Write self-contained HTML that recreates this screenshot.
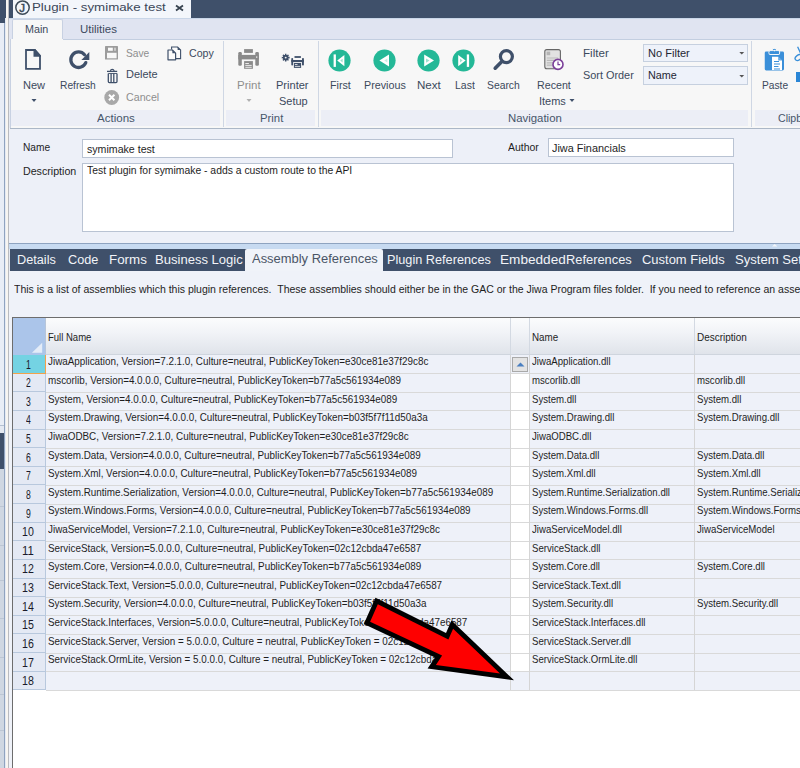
<!DOCTYPE html>
<html><head><meta charset="utf-8"><style>
html,body{margin:0;padding:0;}
body{width:800px;height:768px;position:relative;overflow:hidden;background:#e4e9f2;font-family:"Liberation Sans",sans-serif;}
.a{position:absolute;box-sizing:border-box;}
.t{position:absolute;white-space:nowrap;transform-origin:0 0;}
svg{position:absolute;overflow:visible;}
</style></head><body>
<div class="a" style="left:0px;top:0px;width:800px;height:17.5px;background:#3f506a"></div>
<div class="a" style="left:0px;top:0px;width:4.7px;height:22.5px;background:#3f506a"></div>
<div class="a" style="left:0px;top:22.5px;width:4.7px;height:402.5px;background:#e8edf6"></div>
<div class="a" style="left:0px;top:425px;width:4.7px;height:1px;background:#b4c0d2"></div>
<div class="a" style="left:0px;top:433px;width:4.7px;height:36.4px;background:#3f506a"></div>
<div class="a" style="left:0px;top:469.4px;width:4.7px;height:300px;background:#cfd7e2"></div>
<div class="a" style="left:0px;top:506px;width:4.7px;height:0.8px;background:#bcc6d4"></div>
<div class="a" style="left:0px;top:545px;width:4.7px;height:0.8px;background:#bcc6d4"></div>
<div class="a" style="left:0px;top:580px;width:4.7px;height:0.8px;background:#bcc6d4"></div>
<div class="a" style="left:0px;top:618px;width:4.7px;height:0.8px;background:#bcc6d4"></div>
<div class="a" style="left:0px;top:657px;width:4.7px;height:0.8px;background:#bcc6d4"></div>
<div class="a" style="left:0px;top:694px;width:4.7px;height:0.8px;background:#bcc6d4"></div>
<div class="a" style="left:0px;top:730px;width:4.7px;height:0.8px;background:#bcc6d4"></div>
<div class="a" style="left:4.2px;top:22.5px;width:1.3px;height:746px;background:#8fa3c0"></div>
<div class="a" style="left:5.5px;top:0px;width:2.7px;height:768px;background:#f7f5f1"></div>
<div class="a" style="left:8.2px;top:0px;width:1px;height:768px;background:#b9bbc0"></div>
<div class="a" style="left:13px;top:0px;width:178px;height:17.5px;background:#f3f6fb"></div>
<svg style="left:15px;top:0px" width="16" height="16" viewBox="0 0 16 16"><circle cx="7.5" cy="7.6" r="6.7" fill="none" stroke="#3c4a58" stroke-width="1.5"/><text x="7.2" y="12.2" text-anchor="middle" font-family="Liberation Sans" font-size="11.5" fill="#3c4a58" stroke="#3c4a58" stroke-width="0.5">J</text></svg>
<span class="t" style="left:32.00px;top:1.51px;font-size:11px;line-height:11px;color:#3a4658;transform:scaleX(1.2093);">Plugin - symimake test</span>
<svg style="left:175px;top:5px" width="9" height="6" viewBox="0 0 9 6"><path d="M1 0.5 L8 5.5 M8 0.5 L1 5.5" stroke="#36424f" stroke-width="1.8"/></svg>
<div class="a" style="left:9.2px;top:17.5px;width:791px;height:21.8px;background:#e0e4f1;border-top:1px solid #c9d6e8"></div>
<div class="a" style="left:12px;top:19px;width:50.5px;height:20.5px;background:#f7f7f7;border:1px solid #c8d1e2;border-bottom:none;border-radius:2px 2px 0 0"></div>
<span class="t" style="left:24.50px;top:24.11px;font-size:11px;line-height:11px;color:#3d4a5e;transform:scaleX(0.9773);">Main</span>
<span class="t" style="left:79.50px;top:24.11px;font-size:11px;line-height:11px;color:#3d4a5e;transform:scaleX(1.0409);">Utilities</span>
<div class="a" style="left:9.5px;top:39.3px;width:790.5px;height:88.3px;background:#f7f7f7;border-left:1px solid #c8d1e2"></div>
<div class="a" style="left:62.5px;top:39.0px;width:737.5px;height:1px;background:#c3cee0"></div>
<div class="a" style="left:10.5px;top:110px;width:209px;height:16px;background:#eceef6"></div>
<div class="a" style="left:226px;top:110px;width:88.5px;height:16px;background:#eceef6"></div>
<div class="a" style="left:321px;top:110px;width:427px;height:16px;background:#eceef6"></div>
<div class="a" style="left:755px;top:110px;width:45px;height:16px;background:#eceef6"></div>
<div class="a" style="left:222.5px;top:40.5px;width:1.2px;height:86.5px;background:#cfd7e4"></div>
<div class="a" style="left:317.6px;top:40.5px;width:1.2px;height:86.5px;background:#cfd7e4"></div>
<div class="a" style="left:751px;top:40.5px;width:1.2px;height:86.5px;background:#cfd7e4"></div>
<span class="t" style="left:97.00px;top:112.91px;font-size:11px;line-height:11px;color:#46556a;transform:scaleX(1.0479);">Actions</span>
<span class="t" style="left:259.50px;top:112.91px;font-size:11px;line-height:11px;color:#46556a;transform:scaleX(1.0302);">Print</span>
<span class="t" style="left:508.00px;top:112.91px;font-size:11px;line-height:11px;color:#46556a;transform:scaleX(1.0351);">Navigation</span>
<span class="t" style="left:777.70px;top:112.91px;font-size:11px;line-height:11px;color:#46556a;transform:scaleX(0.9614);">Clipboard</span>
<svg style="left:24px;top:48px" width="19" height="23" viewBox="0 0 19 23"><path d="M2 2 H10.8 L16 7.9 V20.9 H2 Z" fill="none" stroke="#3f506a" stroke-width="1.8" stroke-linejoin="miter"/><path d="M9.5 1.1 H11.2 L16.9 7.5 V8.7 H9.5 Z" fill="#3f506a"/></svg>
<span class="t" style="left:23.10px;top:80.31px;font-size:11px;line-height:11px;color:#3b495c;transform:scaleX(1.0043);">New</span>
<svg style="left:30.5px;top:98.5px" width="6" height="4" viewBox="0 0 6 4"><path d="M0.5 0 H5.5 L3 3 Z" fill="#3f506a"/></svg>
<svg style="left:64.6px;top:46px" width="28" height="28" viewBox="0 0 28 28"><path d="M19.54 8.72 A7.75 7.75 0 1 0 20.78 16.6" fill="none" stroke="#3f506a" stroke-width="3.3" stroke-linecap="round"/><path d="M16.4 14.0 L24.3 14.0 L24.3 6.0 Z" fill="#3f506a"/></svg>
<span class="t" style="left:60.00px;top:80.31px;font-size:11px;line-height:11px;color:#3b495c;transform:scaleX(0.9295);">Refresh</span>
<svg style="left:105px;top:46.2px" width="13" height="13.6" viewBox="0 0 13 13.6"><rect x="0" y="0" width="13" height="13.6" rx="0.6" fill="#9c9c9c"/><rect x="3" y="1.7" width="4.8" height="3.1" fill="#fafafa"/><rect x="9" y="1.7" width="2" height="3.1" fill="#cacaca"/><rect x="2" y="6.8" width="9.6" height="5.5" fill="#f8f8f8"/></svg>
<span class="t" style="left:125.80px;top:48.01px;font-size:11px;line-height:11px;color:#8e8e8e;transform:scaleX(0.9293);">Save</span>
<svg style="left:106px;top:68px" width="13" height="16" viewBox="0 0 13 16"><path d="M1 3.4 H11.2" stroke="#3f506a" stroke-width="1.3"/><path d="M4.4 3 Q4.6 1.4 6.2 1.4 Q7.8 1.4 8.2 3" fill="none" stroke="#3f506a" stroke-width="1.1"/><path d="M2.3 5.5 V13.6 Q2.3 14.6 3.3 14.6 H10 Q11 14.6 11 13.6 V5.5" fill="none" stroke="#3f506a" stroke-width="1.3"/><path d="M2.3 5.5 H11" stroke="#3f506a" stroke-width="0.9"/><path d="M5.1 5.6 V14 M7.8 5.6 V14" stroke="#3f506a" stroke-width="1.3"/></svg>
<span class="t" style="left:125.80px;top:69.46px;font-size:11px;line-height:11px;color:#3b495c;transform:scaleX(0.9970);">Delete</span>
<svg style="left:104px;top:90px" width="16" height="16" viewBox="0 0 16 16"><circle cx="7.7" cy="7.5" r="7.4" fill="#a8a8a8"/><path d="M5 4.8 L10.4 10.2 M10.4 4.8 L5 10.2" stroke="#ffffff" stroke-width="2"/></svg>
<span class="t" style="left:125.80px;top:91.96px;font-size:11px;line-height:11px;color:#8e8e8e;transform:scaleX(0.9696);">Cancel</span>
<svg style="left:167px;top:45.5px" width="15" height="15" viewBox="0 0 15 15"><path d="M4.6 3.5 V1 H10.6 L13.6 4 V12.6 H9" fill="#fbfbfb" stroke="#3f506a" stroke-width="1.1"/><path d="M10.6 1 V4 H13.6 Z" fill="#3f506a"/><path d="M1 4 H5.4 L8.6 7.2 V13.8 H1 Z" fill="#fbfbfb" stroke="#3f506a" stroke-width="1.2" stroke-linejoin="round"/><path d="M5.4 4 V7.2 H8.6 Z" fill="#3f506a"/></svg>
<span class="t" style="left:188.50px;top:48.01px;font-size:11px;line-height:11px;color:#3b495c;transform:scaleX(0.9658);">Copy</span>
<svg style="left:238px;top:49px" width="22" height="21" viewBox="0 0 22 21"><g fill="#8a8a8a"><rect x="6.1" y="0.1" width="8.8" height="3.8"/><rect x="0.3" y="3.1" width="3.5" height="13.7" rx="1.2"/><rect x="17.3" y="3.1" width="3.6" height="13.7" rx="1.2"/><rect x="0.3" y="5.9" width="20.6" height="4.5"/><rect x="6.1" y="12.1" width="8.8" height="7.7"/></g><rect x="18.1" y="7.4" width="1.2" height="1.4" fill="#f2f2f2"/><g fill="#f7f7f7"><rect x="7.3" y="14.0" width="3.6" height="0.9"/><rect x="7.3" y="15.9" width="6.4" height="0.9"/><rect x="7.3" y="17.8" width="6.4" height="0.9"/></g></svg>
<span class="t" style="left:236.90px;top:80.31px;font-size:11px;line-height:11px;color:#8e8e8e;transform:scaleX(1.0456);">Print</span>
<svg style="left:245.5px;top:98.5px" width="6" height="4" viewBox="0 0 6 4"><path d="M0.5 0 H5.5 L3 3 Z" fill="#b0b0b0"/></svg>
<svg style="left:281px;top:53px" width="24" height="16" viewBox="0 0 24 16"><path d="M7.53 3.97 L8.62 3.81 L8.62 5.39 L7.53 5.23 L7.15 6.15 L8.03 6.81 L6.91 7.93 L6.25 7.05 L5.33 7.43 L5.49 8.52 L3.91 8.52 L4.07 7.43 L3.15 7.05 L2.49 7.93 L1.37 6.81 L2.25 6.15 L1.87 5.23 L0.78 5.39 L0.78 3.81 L1.87 3.97 L2.25 3.05 L1.37 2.39 L2.49 1.27 L3.15 2.15 L4.07 1.77 L3.91 0.68 L5.49 0.68 L5.33 1.77 L6.25 2.15 L6.91 1.27 L8.03 2.39 L7.15 3.05 Z" fill="#3f506a"/><circle cx="4.7" cy="4.6" r="2.6" fill="#3f506a"/><circle cx="4.7" cy="4.6" r="0.95" fill="#f7f7f7"/><g fill="#3f506a"><rect x="13.5" y="3.1" width="6.4" height="1.8"/><rect x="10.3" y="4.9" width="1.8" height="7.7" rx="0.8"/><rect x="21" y="4.9" width="1.9" height="7.7" rx="0.8"/><rect x="10.3" y="7" width="12.6" height="2.1"/><rect x="12.9" y="10" width="7.2" height="4.9"/></g><g fill="#f7f7f7"><rect x="13.9" y="11.1" width="2.6" height="0.8"/><rect x="13.9" y="12.9" width="5.2" height="0.8"/></g></svg>
<span class="t" style="left:276.25px;top:80.31px;font-size:11px;line-height:11px;color:#3b495c;transform:scaleX(1.0047);">Printer</span>
<span class="t" style="left:279.00px;top:95.61px;font-size:11px;line-height:11px;color:#3b495c;transform:scaleX(0.9984);">Setup</span>
<svg style="left:328.4px;top:48.5px" width="23" height="23" viewBox="0 0 23 23"><circle cx="11.5" cy="11.5" r="11.1" fill="#24b897"/><rect x="5.6" y="5.4" width="2.3" height="12.5" fill="#fff"/><path d="M9.2 11.6 L16.4 6.0 V17.2 Z" fill="#fff"/><path d="M12.2 11.6 L14.6 9.8 V13.4 Z" fill="#9fe0d0"/></svg>
<svg style="left:372.7px;top:48.5px" width="23" height="23" viewBox="0 0 23 23"><circle cx="11.5" cy="11.5" r="11.1" fill="#24b897"/><path d="M6.4 11.6 L16.0 5.6 V17.4 Z" fill="#fff"/><path d="M11.2 11.6 L14.4 9.6 V13.6 Z" fill="#c8eee4"/></svg>
<svg style="left:416.9px;top:48.5px" width="23" height="23" viewBox="0 0 23 23"><circle cx="11.5" cy="11.5" r="11.1" fill="#24b897"/><path d="M7.2 5.6 L17.0 11.6 L7.2 17.4 Z" fill="#fff"/><path d="M9.0 9.4 L12.6 11.6 L9.0 13.8 Z" fill="#9fe0d0"/></svg>
<svg style="left:452.2px;top:48.5px" width="23" height="23" viewBox="0 0 23 23"><circle cx="11.5" cy="11.5" r="11.1" fill="#24b897"/><path d="M6.2 5.9 L13.6 11.6 L6.2 17.2 Z" fill="#fff"/><path d="M8.0 9.6 L10.6 11.6 L8.0 13.6 Z" fill="#9fe0d0"/><rect x="14.8" y="5.4" width="2.3" height="12.5" fill="#fff"/></svg>
<span class="t" style="left:330.00px;top:80.31px;font-size:11px;line-height:11px;color:#3b495c;transform:scaleX(0.9728);">First</span>
<span class="t" style="left:364.00px;top:80.31px;font-size:11px;line-height:11px;color:#3b495c;transform:scaleX(0.9767);">Previous</span>
<span class="t" style="left:417.00px;top:80.31px;font-size:11px;line-height:11px;color:#3b495c;transform:scaleX(1.0523);">Next</span>
<span class="t" style="left:455.00px;top:80.31px;font-size:11px;line-height:11px;color:#3b495c;transform:scaleX(0.9523);">Last</span>
<svg style="left:492px;top:48px" width="24" height="23" viewBox="0 0 24 23"><circle cx="14.4" cy="8.6" r="6" fill="none" stroke="#3f506a" stroke-width="3.2"/><path d="M9.6 13.8 L3.2 20.2" stroke="#3f506a" stroke-width="3.6" stroke-linecap="round"/></svg>
<span class="t" style="left:487.00px;top:80.31px;font-size:11px;line-height:11px;color:#3b495c;transform:scaleX(0.9411);">Search</span>
<svg style="left:544px;top:49px" width="22" height="22" viewBox="0 0 22 22"><rect x="0.8" y="0.6" width="15.6" height="19.2" rx="2" fill="#e2e2e2" stroke="#666" stroke-width="1.1"/><rect x="2.6" y="2.6" width="3.6" height="3.6" fill="#b4b4b4"/><path d="M2.8 9 H14 M2.8 11.4 H14 M2.8 13.8 H10 M2.8 16.2 H10" stroke="#b9b9b9" stroke-width="1.2"/><circle cx="14" cy="15.4" r="5" fill="#fff" stroke="#7b3f99" stroke-width="1.6"/><path d="M14 12.6 V15.6 H16.2" fill="none" stroke="#7b3f99" stroke-width="1.2"/></svg>
<span class="t" style="left:537.00px;top:80.31px;font-size:11px;line-height:11px;color:#3b495c;transform:scaleX(0.9698);">Recent</span>
<span class="t" style="left:539.00px;top:95.61px;font-size:11px;line-height:11px;color:#3b495c;transform:scaleX(0.9965);">Items</span>
<svg style="left:568.5px;top:98.5px" width="6" height="4" viewBox="0 0 6 4"><path d="M0.5 0 H5.5 L3 3 Z" fill="#3f506a"/></svg>
<span class="t" style="left:583.00px;top:47.61px;font-size:11px;line-height:11px;color:#3b495c;transform:scaleX(1.0555);">Filter</span>
<span class="t" style="left:583.00px;top:69.71px;font-size:11px;line-height:11px;color:#3b495c;transform:scaleX(0.9893);">Sort Order</span>
<div class="a" style="left:643.3px;top:44px;width:104.5px;height:18px;background:#eef2fa;border:1px solid #c6d0df"></div>
<div class="a" style="left:643.3px;top:66px;width:104.5px;height:18.7px;background:#eef2fa;border:1px solid #c6d0df"></div>
<span class="t" style="left:647.50px;top:47.61px;font-size:11px;line-height:11px;color:#1f2633;transform:scaleX(1.0057);">No Filter</span>
<span class="t" style="left:647.50px;top:69.91px;font-size:11px;line-height:11px;color:#1f2633;transform:scaleX(0.9815);">Name</span>
<svg style="left:739px;top:52.2px" width="6" height="4" viewBox="0 0 6 4"><path d="M0.3 0 H5.2 L2.75 2.6 Z" fill="#555"/></svg>
<svg style="left:739px;top:74.6px" width="6" height="4" viewBox="0 0 6 4"><path d="M0.3 0 H5.2 L2.75 2.6 Z" fill="#555"/></svg>
<svg style="left:764px;top:48px" width="22" height="24" viewBox="0 0 22 24"><rect x="0.75" y="3.5" width="19.25" height="19" rx="1.4" fill="#3a8fd9"/><g stroke="#f7f7f7" stroke-width="1.1" fill="#3a8fd9"><circle cx="10.4" cy="2.6" r="2.3"/><rect x="5" y="2.8" width="10.6" height="3.6" rx="1.4"/></g><rect x="5.5" y="3.3" width="9.6" height="2.6" rx="1" fill="#3a8fd9"/><circle cx="10.4" cy="2.6" r="0.8" fill="#f7f7f7"/><path d="M8 8.75 H14.2 L18 12.5 V22 H8 Z" fill="#fff"/><path d="M14.2 8.75 V12.5 H18 Z" fill="#3a8fd9" opacity="0.8"/><path d="M10 13.5 H15 M10 16 H16 M10 18.5 H14.5 M10 21 H16" fill="none" stroke="#3a8fd9" stroke-width="1"/></svg>
<span class="t" style="left:761.70px;top:80.11px;font-size:11px;line-height:11px;color:#3b495c;transform:scaleX(0.9279);">Paste</span>
<svg style="left:793px;top:46px" width="10" height="16" viewBox="0 0 10 16"><path d="M4.6 0.8 L8 8" stroke="#3a8fd9" stroke-width="1.3"/><ellipse cx="5.4" cy="11.6" rx="3.6" ry="2.4" transform="rotate(-35 5.4 11.6)" fill="none" stroke="#3a8fd9" stroke-width="1.4"/></svg>
<div class="a" style="left:796px;top:72px;width:4px;height:10px;background:#2a86d6"></div>
<div class="a" style="left:9.2px;top:128px;width:790.8px;height:115.5px;background:#edf0f8"></div>
<div class="a" style="left:9.5px;top:127.5px;width:790.5px;height:1.4px;background:#abb7c7"></div>
<span class="t" style="left:22.80px;top:142.31px;font-size:11px;line-height:11px;color:#1e1e1e;transform:scaleX(0.9270);">Name</span>
<span class="t" style="left:22.80px;top:166.41px;font-size:11px;line-height:11px;color:#1e1e1e;transform:scaleX(0.9687);">Description</span>
<span class="t" style="left:508.00px;top:141.91px;font-size:11px;line-height:11px;color:#1e1e1e;transform:scaleX(0.9503);">Author</span>
<div class="a" style="left:82px;top:139px;width:370.5px;height:18.5px;background:#ffffff;border:1px solid #b9c3d3"></div>
<div class="a" style="left:547.8px;top:138.1px;width:186px;height:18.8px;background:#ffffff;border:1px solid #b9c3d3"></div>
<div class="a" style="left:82px;top:163.3px;width:651.8px;height:68.5px;background:#ffffff;border:1px solid #b9c3d3"></div>
<span class="t" style="left:86.50px;top:143.91px;font-size:11px;line-height:11px;color:#1e1e1e;transform:scaleX(0.9646);">symimake test</span>
<span class="t" style="left:551.50px;top:143.01px;font-size:11px;line-height:11px;color:#1e1e1e;transform:scaleX(0.9895);">Jiwa Financials</span>
<span class="t" style="left:86.50px;top:165.31px;font-size:11px;line-height:11px;color:#1e1e1e;transform:scaleX(0.9431);">Test plugin for symimake - adds a custom route to the API</span>
<div class="a" style="left:9.2px;top:243px;width:790.8px;height:1px;background:#8ea3c0"></div>
<div class="a" style="left:9.2px;top:244px;width:790.8px;height:4.6px;background:#c7daf1"></div>
<div class="a" style="left:9.5px;top:248.6px;width:790.5px;height:22.6px;background:#3f506a"></div>
<svg style="left:771.5px;top:243.8px" width="6" height="3" viewBox="0 0 6 3"><path d="M0 2.6 L2.7 0 L5.4 2.6 Z" fill="#f4f6fa"/></svg>
<div class="a" style="left:245px;top:248.6px;width:138px;height:22.8px;background:#f0f3f9;border-radius:2px 2px 0 0"></div>
<span class="t" style="left:17.00px;top:254.09px;font-size:12px;line-height:12px;color:#f2f4f8;transform:scaleX(1.0578);">Details</span>
<span class="t" style="left:68.00px;top:254.09px;font-size:12px;line-height:12px;color:#f2f4f8;transform:scaleX(1.0562);">Code</span>
<span class="t" style="left:109.00px;top:254.09px;font-size:12px;line-height:12px;color:#f2f4f8;transform:scaleX(1.1119);">Forms</span>
<span class="t" style="left:155.00px;top:254.09px;font-size:12px;line-height:12px;color:#f2f4f8;transform:scaleX(1.0878);">Business Logic</span>
<span class="t" style="left:252.00px;top:253.09px;font-size:12px;line-height:12px;color:#4a5566;transform:scaleX(1.0779);">Assembly References</span>
<span class="t" style="left:387.00px;top:254.09px;font-size:12px;line-height:12px;color:#f2f4f8;transform:scaleX(1.0586);">Plugin References</span>
<span class="t" style="left:500.00px;top:254.09px;font-size:12px;line-height:12px;color:#f2f4f8;transform:scaleX(1.1336);">Embedded</span>
<span class="t" style="left:566.00px;top:254.09px;font-size:12px;line-height:12px;color:#f2f4f8;transform:scaleX(1.0723);">References</span>
<span class="t" style="left:642.00px;top:254.09px;font-size:12px;line-height:12px;color:#f2f4f8;transform:scaleX(1.0797);">Custom Fields</span>
<span class="t" style="left:735.00px;top:254.09px;font-size:12px;line-height:12px;color:#f2f4f8;transform:scaleX(1.0888);">System Settings</span>
<div class="a" style="left:9.2px;top:271.2px;width:790.8px;height:497px;background:#eff2f9"></div>
<span class="t" style="left:14.00px;top:284.21px;font-size:11px;line-height:11px;color:#1e1e1e;transform:scaleX(0.9547);">This is a list of assemblies which this plugin references. &nbsp;These assemblies should either be in the GAC or the Jiwa Program files folder. &nbsp;If you need to reference an assembly</span>
<div class="a" style="left:11.6px;top:316.8px;width:788.4px;height:451.2px;background:#ffffff"></div>
<div class="a" style="left:11.6px;top:316.8px;width:788.4px;height:1.6px;background:#6d6d6d"></div>
<div class="a" style="left:11.6px;top:316.8px;width:1.4px;height:451.2px;background:#6d6d6d"></div>
<div class="a" style="left:13px;top:318.4px;width:32.5px;height:36.700000000000045px;background:#abc5ea"></div>
<svg style="left:31px;top:342px" width="12" height="12" viewBox="0 0 12 12"><path d="M0.9 10.8 L11.2 10.8 L11.2 0.8 Z" fill="#e4ecf8"/></svg>
<div class="a" style="left:45px;top:318.4px;width:1.2px;height:36.700000000000045px;background:#b7c5d9"></div>
<div class="a" style="left:46.2px;top:318.4px;width:753.8px;height:36.700000000000045px;background:linear-gradient(#fbfcfd 0%,#f1f3f7 40%,#dfe3ea 100%)"></div>
<div class="a" style="left:510.2px;top:318.4px;width:1px;height:36.700000000000045px;background:#d3d9e2"></div>
<div class="a" style="left:529.4px;top:318.4px;width:1px;height:36.700000000000045px;background:#d3d9e2"></div>
<div class="a" style="left:694.4px;top:318.4px;width:1px;height:36.700000000000045px;background:#d3d9e2"></div>
<div class="a" style="left:46.2px;top:354.1px;width:753.8px;height:1px;background:#cfd5de"></div>
<span class="t" style="left:47.80px;top:331.51px;font-size:11px;line-height:11px;color:#1e1e1e;transform:scaleX(0.8659);">Full Name</span>
<span class="t" style="left:531.60px;top:331.51px;font-size:11px;line-height:11px;color:#1e1e1e;transform:scaleX(0.8929);">Name</span>
<span class="t" style="left:697.00px;top:331.51px;font-size:11px;line-height:11px;color:#1e1e1e;transform:scaleX(0.9051);">Description</span>
<div class="a" style="left:46.2px;top:355.1px;width:753.8px;height:335.16px;background:#eef1f9"></div>
<div class="a" style="left:510.7px;top:373.72px;width:18.7px;height:297.92px;background:#ffffff"></div>
<div class="a" style="left:46.2px;top:373.22px;width:753.8px;height:0.9px;background:#d9d9d9"></div>
<div class="a" style="left:46.2px;top:391.84000000000003px;width:753.8px;height:0.9px;background:#d9d9d9"></div>
<div class="a" style="left:46.2px;top:410.46000000000004px;width:753.8px;height:0.9px;background:#d9d9d9"></div>
<div class="a" style="left:46.2px;top:429.08000000000004px;width:753.8px;height:0.9px;background:#d9d9d9"></div>
<div class="a" style="left:46.2px;top:447.70000000000005px;width:753.8px;height:0.9px;background:#d9d9d9"></div>
<div class="a" style="left:46.2px;top:466.32000000000005px;width:753.8px;height:0.9px;background:#d9d9d9"></div>
<div class="a" style="left:46.2px;top:484.94000000000005px;width:753.8px;height:0.9px;background:#d9d9d9"></div>
<div class="a" style="left:46.2px;top:503.56000000000006px;width:753.8px;height:0.9px;background:#d9d9d9"></div>
<div class="a" style="left:46.2px;top:522.1800000000001px;width:753.8px;height:0.9px;background:#d9d9d9"></div>
<div class="a" style="left:46.2px;top:540.8000000000001px;width:753.8px;height:0.9px;background:#d9d9d9"></div>
<div class="a" style="left:46.2px;top:559.4200000000001px;width:753.8px;height:0.9px;background:#d9d9d9"></div>
<div class="a" style="left:46.2px;top:578.0400000000001px;width:753.8px;height:0.9px;background:#d9d9d9"></div>
<div class="a" style="left:46.2px;top:596.66px;width:753.8px;height:0.9px;background:#d9d9d9"></div>
<div class="a" style="left:46.2px;top:615.2800000000001px;width:753.8px;height:0.9px;background:#d9d9d9"></div>
<div class="a" style="left:46.2px;top:633.9px;width:753.8px;height:0.9px;background:#d9d9d9"></div>
<div class="a" style="left:46.2px;top:652.5200000000001px;width:753.8px;height:0.9px;background:#d9d9d9"></div>
<div class="a" style="left:46.2px;top:671.14px;width:753.8px;height:0.9px;background:#d9d9d9"></div>
<div class="a" style="left:46.2px;top:689.7600000000001px;width:753.8px;height:0.9px;background:#d9d9d9"></div>
<div class="a" style="left:510.2px;top:355.1px;width:0.9px;height:335.16px;background:#d5d5d5"></div>
<div class="a" style="left:529.4px;top:355.1px;width:0.9px;height:335.16px;background:#d5d5d5"></div>
<div class="a" style="left:694.4px;top:355.1px;width:0.9px;height:335.16px;background:#d5d5d5"></div>
<div class="a" style="left:13px;top:355.1px;width:32.5px;height:18.62px;background:#74d3e3;border-right:1px solid #f2a24a;border-bottom:1px solid #f2a24a"></div>
<div class="a" style="left:13px;top:373.72px;width:32.5px;height:18.62px;background:#e4e9f4;border-right:1px solid #b8c8dd;border-bottom:1px solid #b8c8dd"></div>
<div class="a" style="left:13px;top:392.34000000000003px;width:32.5px;height:18.62px;background:#e4e9f4;border-right:1px solid #b8c8dd;border-bottom:1px solid #b8c8dd"></div>
<div class="a" style="left:13px;top:410.96000000000004px;width:32.5px;height:18.62px;background:#e4e9f4;border-right:1px solid #b8c8dd;border-bottom:1px solid #b8c8dd"></div>
<div class="a" style="left:13px;top:429.58000000000004px;width:32.5px;height:18.62px;background:#e4e9f4;border-right:1px solid #b8c8dd;border-bottom:1px solid #b8c8dd"></div>
<div class="a" style="left:13px;top:448.20000000000005px;width:32.5px;height:18.62px;background:#e4e9f4;border-right:1px solid #b8c8dd;border-bottom:1px solid #b8c8dd"></div>
<div class="a" style="left:13px;top:466.82000000000005px;width:32.5px;height:18.62px;background:#e4e9f4;border-right:1px solid #b8c8dd;border-bottom:1px solid #b8c8dd"></div>
<div class="a" style="left:13px;top:485.44000000000005px;width:32.5px;height:18.62px;background:#e4e9f4;border-right:1px solid #b8c8dd;border-bottom:1px solid #b8c8dd"></div>
<div class="a" style="left:13px;top:504.06000000000006px;width:32.5px;height:18.62px;background:#e4e9f4;border-right:1px solid #b8c8dd;border-bottom:1px solid #b8c8dd"></div>
<div class="a" style="left:13px;top:522.6800000000001px;width:32.5px;height:18.62px;background:#e4e9f4;border-right:1px solid #b8c8dd;border-bottom:1px solid #b8c8dd"></div>
<div class="a" style="left:13px;top:541.3000000000001px;width:32.5px;height:18.62px;background:#e4e9f4;border-right:1px solid #b8c8dd;border-bottom:1px solid #b8c8dd"></div>
<div class="a" style="left:13px;top:559.9200000000001px;width:32.5px;height:18.62px;background:#e4e9f4;border-right:1px solid #b8c8dd;border-bottom:1px solid #b8c8dd"></div>
<div class="a" style="left:13px;top:578.54px;width:32.5px;height:18.62px;background:#e4e9f4;border-right:1px solid #b8c8dd;border-bottom:1px solid #b8c8dd"></div>
<div class="a" style="left:13px;top:597.1600000000001px;width:32.5px;height:18.62px;background:#e4e9f4;border-right:1px solid #b8c8dd;border-bottom:1px solid #b8c8dd"></div>
<div class="a" style="left:13px;top:615.78px;width:32.5px;height:18.62px;background:#e4e9f4;border-right:1px solid #b8c8dd;border-bottom:1px solid #b8c8dd"></div>
<div class="a" style="left:13px;top:634.4000000000001px;width:32.5px;height:18.62px;background:#e4e9f4;border-right:1px solid #b8c8dd;border-bottom:1px solid #b8c8dd"></div>
<div class="a" style="left:13px;top:653.02px;width:32.5px;height:18.62px;background:#e4e9f4;border-right:1px solid #b8c8dd;border-bottom:1px solid #b8c8dd"></div>
<div class="a" style="left:13px;top:671.6400000000001px;width:32.5px;height:18.62px;background:#e4e9f4;border-right:1px solid #b8c8dd;border-bottom:1px solid #b8c8dd"></div>
<span class="t" style="left:25.80px;top:358.59px;font-size:12px;line-height:12px;color:#1a1a2a;transform:scaleX(0.7192);">1</span>
<span class="t" style="left:47.50px;top:356.41px;font-size:11px;line-height:11px;color:#1e1e1e;transform:scaleX(0.8970);">JiwaApplication, Version=7.2.1.0, Culture=neutral, PublicKeyToken=e30ce81e37f29c8c</span>
<span class="t" style="left:531.80px;top:356.41px;font-size:11px;line-height:11px;color:#1e1e1e;transform:scaleX(0.8750);">JiwaApplication.dll</span>
<span class="t" style="left:25.80px;top:377.21px;font-size:12px;line-height:12px;color:#1a1a2a;transform:scaleX(0.7192);">2</span>
<span class="t" style="left:47.50px;top:375.03px;font-size:11px;line-height:11px;color:#1e1e1e;transform:scaleX(0.8970);">mscorlib, Version=4.0.0.0, Culture=neutral, PublicKeyToken=b77a5c561934e089</span>
<span class="t" style="left:531.80px;top:375.03px;font-size:11px;line-height:11px;color:#1e1e1e;transform:scaleX(0.8750);">mscorlib.dll</span>
<span class="t" style="left:697.00px;top:375.03px;font-size:11px;line-height:11px;color:#1e1e1e;transform:scaleX(0.8750);">mscorlib.dll</span>
<span class="t" style="left:25.80px;top:395.83px;font-size:12px;line-height:12px;color:#1a1a2a;transform:scaleX(0.7192);">3</span>
<span class="t" style="left:47.50px;top:393.65px;font-size:11px;line-height:11px;color:#1e1e1e;transform:scaleX(0.8970);">System, Version=4.0.0.0, Culture=neutral, PublicKeyToken=b77a5c561934e089</span>
<span class="t" style="left:531.80px;top:393.65px;font-size:11px;line-height:11px;color:#1e1e1e;transform:scaleX(0.8750);">System.dll</span>
<span class="t" style="left:697.00px;top:393.65px;font-size:11px;line-height:11px;color:#1e1e1e;transform:scaleX(0.8750);">System.dll</span>
<span class="t" style="left:25.80px;top:414.45px;font-size:12px;line-height:12px;color:#1a1a2a;transform:scaleX(0.7192);">4</span>
<span class="t" style="left:47.50px;top:412.27px;font-size:11px;line-height:11px;color:#1e1e1e;transform:scaleX(0.8970);">System.Drawing, Version=4.0.0.0, Culture=neutral, PublicKeyToken=b03f5f7f11d50a3a</span>
<span class="t" style="left:531.80px;top:412.27px;font-size:11px;line-height:11px;color:#1e1e1e;transform:scaleX(0.8750);">System.Drawing.dll</span>
<span class="t" style="left:697.00px;top:412.27px;font-size:11px;line-height:11px;color:#1e1e1e;transform:scaleX(0.8750);">System.Drawing.dll</span>
<span class="t" style="left:25.80px;top:433.07px;font-size:12px;line-height:12px;color:#1a1a2a;transform:scaleX(0.7192);">5</span>
<span class="t" style="left:47.50px;top:430.89px;font-size:11px;line-height:11px;color:#1e1e1e;transform:scaleX(0.8970);">JiwaODBC, Version=7.2.1.0, Culture=neutral, PublicKeyToken=e30ce81e37f29c8c</span>
<span class="t" style="left:531.80px;top:430.89px;font-size:11px;line-height:11px;color:#1e1e1e;transform:scaleX(0.8750);">JiwaODBC.dll</span>
<span class="t" style="left:25.80px;top:451.69px;font-size:12px;line-height:12px;color:#1a1a2a;transform:scaleX(0.7192);">6</span>
<span class="t" style="left:47.50px;top:449.51px;font-size:11px;line-height:11px;color:#1e1e1e;transform:scaleX(0.8970);">System.Data, Version=4.0.0.0, Culture=neutral, PublicKeyToken=b77a5c561934e089</span>
<span class="t" style="left:531.80px;top:449.51px;font-size:11px;line-height:11px;color:#1e1e1e;transform:scaleX(0.8750);">System.Data.dll</span>
<span class="t" style="left:697.00px;top:449.51px;font-size:11px;line-height:11px;color:#1e1e1e;transform:scaleX(0.8750);">System.Data.dll</span>
<span class="t" style="left:25.80px;top:470.31px;font-size:12px;line-height:12px;color:#1a1a2a;transform:scaleX(0.7192);">7</span>
<span class="t" style="left:47.50px;top:468.13px;font-size:11px;line-height:11px;color:#1e1e1e;transform:scaleX(0.8970);">System.Xml, Version=4.0.0.0, Culture=neutral, PublicKeyToken=b77a5c561934e089</span>
<span class="t" style="left:531.80px;top:468.13px;font-size:11px;line-height:11px;color:#1e1e1e;transform:scaleX(0.8750);">System.Xml.dll</span>
<span class="t" style="left:697.00px;top:468.13px;font-size:11px;line-height:11px;color:#1e1e1e;transform:scaleX(0.8750);">System.Xml.dll</span>
<span class="t" style="left:25.80px;top:488.93px;font-size:12px;line-height:12px;color:#1a1a2a;transform:scaleX(0.7192);">8</span>
<span class="t" style="left:47.50px;top:486.75px;font-size:11px;line-height:11px;color:#1e1e1e;transform:scaleX(0.8970);">System.Runtime.Serialization, Version=4.0.0.0, Culture=neutral, PublicKeyToken=b77a5c561934e089</span>
<span class="t" style="left:531.80px;top:486.75px;font-size:11px;line-height:11px;color:#1e1e1e;transform:scaleX(0.8750);">System.Runtime.Serialization.dll</span>
<span class="t" style="left:697.00px;top:486.75px;font-size:11px;line-height:11px;color:#1e1e1e;transform:scaleX(0.8750);">System.Runtime.Serialization.dll</span>
<span class="t" style="left:25.80px;top:507.55px;font-size:12px;line-height:12px;color:#1a1a2a;transform:scaleX(0.7192);">9</span>
<span class="t" style="left:47.50px;top:505.37px;font-size:11px;line-height:11px;color:#1e1e1e;transform:scaleX(0.8970);">System.Windows.Forms, Version=4.0.0.0, Culture=neutral, PublicKeyToken=b77a5c561934e089</span>
<span class="t" style="left:531.80px;top:505.37px;font-size:11px;line-height:11px;color:#1e1e1e;transform:scaleX(0.8750);">System.Windows.Forms.dll</span>
<span class="t" style="left:697.00px;top:505.37px;font-size:11px;line-height:11px;color:#1e1e1e;transform:scaleX(0.8750);">System.Windows.Forms.dll</span>
<span class="t" style="left:22.30px;top:526.17px;font-size:12px;line-height:12px;color:#1a1a2a;transform:scaleX(0.8841);">10</span>
<span class="t" style="left:47.50px;top:523.99px;font-size:11px;line-height:11px;color:#1e1e1e;transform:scaleX(0.8970);">JiwaServiceModel, Version=7.2.1.0, Culture=neutral, PublicKeyToken=e30ce81e37f29c8c</span>
<span class="t" style="left:531.80px;top:523.99px;font-size:11px;line-height:11px;color:#1e1e1e;transform:scaleX(0.8750);">JiwaServiceModel.dll</span>
<span class="t" style="left:697.00px;top:523.99px;font-size:11px;line-height:11px;color:#1e1e1e;transform:scaleX(0.8750);">JiwaServiceModel</span>
<span class="t" style="left:22.30px;top:544.79px;font-size:12px;line-height:12px;color:#1a1a2a;transform:scaleX(0.9473);">11</span>
<span class="t" style="left:47.50px;top:542.61px;font-size:11px;line-height:11px;color:#1e1e1e;transform:scaleX(0.8970);">ServiceStack, Version=5.0.0.0, Culture=neutral, PublicKeyToken=02c12cbda47e6587</span>
<span class="t" style="left:531.80px;top:542.61px;font-size:11px;line-height:11px;color:#1e1e1e;transform:scaleX(0.8750);">ServiceStack.dll</span>
<span class="t" style="left:22.30px;top:563.41px;font-size:12px;line-height:12px;color:#1a1a2a;transform:scaleX(0.8841);">12</span>
<span class="t" style="left:47.50px;top:561.23px;font-size:11px;line-height:11px;color:#1e1e1e;transform:scaleX(0.8970);">System.Core, Version=4.0.0.0, Culture=neutral, PublicKeyToken=b77a5c561934e089</span>
<span class="t" style="left:531.80px;top:561.23px;font-size:11px;line-height:11px;color:#1e1e1e;transform:scaleX(0.8750);">System.Core.dll</span>
<span class="t" style="left:697.00px;top:561.23px;font-size:11px;line-height:11px;color:#1e1e1e;transform:scaleX(0.8750);">System.Core.dll</span>
<span class="t" style="left:22.30px;top:582.03px;font-size:12px;line-height:12px;color:#1a1a2a;transform:scaleX(0.8841);">13</span>
<span class="t" style="left:47.50px;top:579.85px;font-size:11px;line-height:11px;color:#1e1e1e;transform:scaleX(0.8970);">ServiceStack.Text, Version=5.0.0.0, Culture=neutral, PublicKeyToken=02c12cbda47e6587</span>
<span class="t" style="left:531.80px;top:579.85px;font-size:11px;line-height:11px;color:#1e1e1e;transform:scaleX(0.8750);">ServiceStack.Text.dll</span>
<span class="t" style="left:22.30px;top:600.65px;font-size:12px;line-height:12px;color:#1a1a2a;transform:scaleX(0.8841);">14</span>
<span class="t" style="left:47.50px;top:598.47px;font-size:11px;line-height:11px;color:#1e1e1e;transform:scaleX(0.8970);">System.Security, Version=4.0.0.0, Culture=neutral, PublicKeyToken=b03f5f7f11d50a3a</span>
<span class="t" style="left:531.80px;top:598.47px;font-size:11px;line-height:11px;color:#1e1e1e;transform:scaleX(0.8750);">System.Security.dll</span>
<span class="t" style="left:697.00px;top:598.47px;font-size:11px;line-height:11px;color:#1e1e1e;transform:scaleX(0.8750);">System.Security.dll</span>
<span class="t" style="left:22.30px;top:619.27px;font-size:12px;line-height:12px;color:#1a1a2a;transform:scaleX(0.8841);">15</span>
<span class="t" style="left:47.50px;top:617.09px;font-size:11px;line-height:11px;color:#1e1e1e;transform:scaleX(0.8970);">ServiceStack.Interfaces, Version=5.0.0.0, Culture=neutral, PublicKeyToken=02c12cbda47e6587</span>
<span class="t" style="left:531.80px;top:617.09px;font-size:11px;line-height:11px;color:#1e1e1e;transform:scaleX(0.8750);">ServiceStack.Interfaces.dll</span>
<span class="t" style="left:22.30px;top:637.89px;font-size:12px;line-height:12px;color:#1a1a2a;transform:scaleX(0.8841);">16</span>
<span class="t" style="left:47.50px;top:635.71px;font-size:11px;line-height:11px;color:#1e1e1e;transform:scaleX(0.8970);">ServiceStack.Server, Version = 5.0.0.0, Culture = neutral, PublicKeyToken = 02c12cbda47e6587</span>
<span class="t" style="left:531.80px;top:635.71px;font-size:11px;line-height:11px;color:#1e1e1e;transform:scaleX(0.8750);">ServiceStack.Server.dll</span>
<span class="t" style="left:22.30px;top:656.51px;font-size:12px;line-height:12px;color:#1a1a2a;transform:scaleX(0.8841);">17</span>
<span class="t" style="left:47.50px;top:654.33px;font-size:11px;line-height:11px;color:#1e1e1e;transform:scaleX(0.8970);">ServiceStack.OrmLite, Version = 5.0.0.0, Culture = neutral, PublicKeyToken = 02c12cbda47e6587</span>
<span class="t" style="left:531.80px;top:654.33px;font-size:11px;line-height:11px;color:#1e1e1e;transform:scaleX(0.8750);">ServiceStack.OrmLite.dll</span>
<span class="t" style="left:22.30px;top:675.13px;font-size:12px;line-height:12px;color:#1a1a2a;transform:scaleX(0.8841);">18</span>
<div class="a" style="left:512px;top:357.1px;width:15.8px;height:15.2px;background:#e3e3e3;border:1px solid #a9a9a9"></div>
<svg style="left:515.5px;top:362.3px" width="9" height="5" viewBox="0 0 9 5"><path d="M0.5 4.6 L4.5 0.4 L8.5 4.6 Z" fill="#4a7fc0"/></svg>
<svg style="left:0;top:0" width="800" height="768" viewBox="0 0 800 768"><polygon points="375.5,597.8 446.0,633.0 451.5,620.5 514.0,680.2 427.6,668.6 435.0,657.5 363.8,624.0" fill="#000"/><polygon points="377.8,604.3 448.4,639.5 453.1,628.7 500.0,673.5 435.9,664.9 442.1,655.5 370.1,621.7" fill="#fe0000"/></svg>
</body></html>
